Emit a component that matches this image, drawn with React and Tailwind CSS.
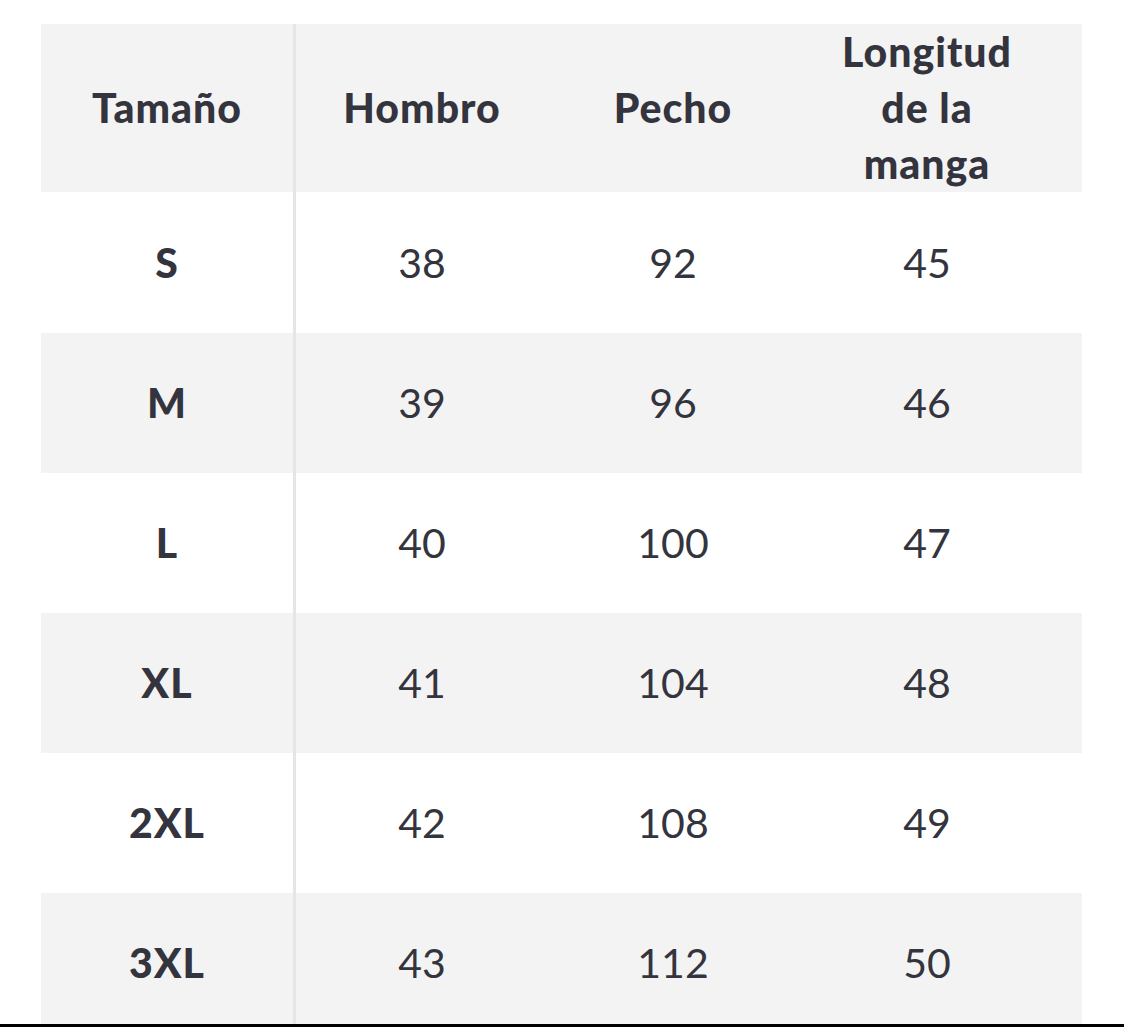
const rows = [
  { size: 'S', hombro: '38', pecho: '92', manga: '45' },
  { size: 'M', hombro: '39', pecho: '96', manga: '46' },
  { size: 'L', hombro: '40', pecho: '100', manga: '47' },
  { size: 'XL', hombro: '41', pecho: '104', manga: '48' },
  { size: '2XL', hombro: '42', pecho: '108', manga: '49' },
  { size: '3XL', hombro: '43', pecho: '112', manga: '50' },
];

const App = () => {
  return (
    <div className="w-[1124px] bg-white pt-[24px] text-[#33343d]" style={{ fontFamily: 'Lato, "Open Sans", sans-serif' }}>
      <div className="ml-[41px] w-[1041px]">
        {/* header */}
        <div className="grid h-[168px] grid-cols-[255px_252px_250px_284px] bg-[#f3f3f4] text-[41px] font-black leading-[56px] tracking-[1px]">
          <div className="flex items-center justify-center border-r-[3px] border-[#e6e6e8]">Tamaño</div>
          <div className="flex items-center justify-center">Hombro</div>
          <div className="flex items-center justify-center">Pecho</div>
          <div className="flex items-center justify-center pr-[26px] text-center">
            <span className="max-w-[200px]">Longitud de la manga</span>
          </div>
        </div>

        {/* body */}
        {rows.map((row, i) => {
          const last = i === rows.length - 1;
          return (
            <div
              key={row.size}
              className={`grid grid-cols-[255px_252px_250px_284px] text-[41px] ${i % 2 === 1 ? 'bg-[#f3f3f4]' : 'bg-white'} ${i === 0 ? 'h-[141px]' : last ? 'h-[131px] pt-[9px]' : 'h-[140px]'}`}
            >
              <div className={`flex items-center justify-center border-r-[3px] border-[#e6e6e8] font-black tracking-[1px] ${last ? '-mt-[9px] pt-[9px]' : ''}`}>{row.size}</div>
              <div className="flex items-center justify-center">{row.hombro}</div>
              <div className="flex items-center justify-center">{row.pecho}</div>
              <div className="flex items-center justify-center pr-[26px]">{row.manga}</div>
            </div>
          );
        })}
      </div>
      <div className="h-[3px] w-full bg-black" />
    </div>
  );
};

export default App;
